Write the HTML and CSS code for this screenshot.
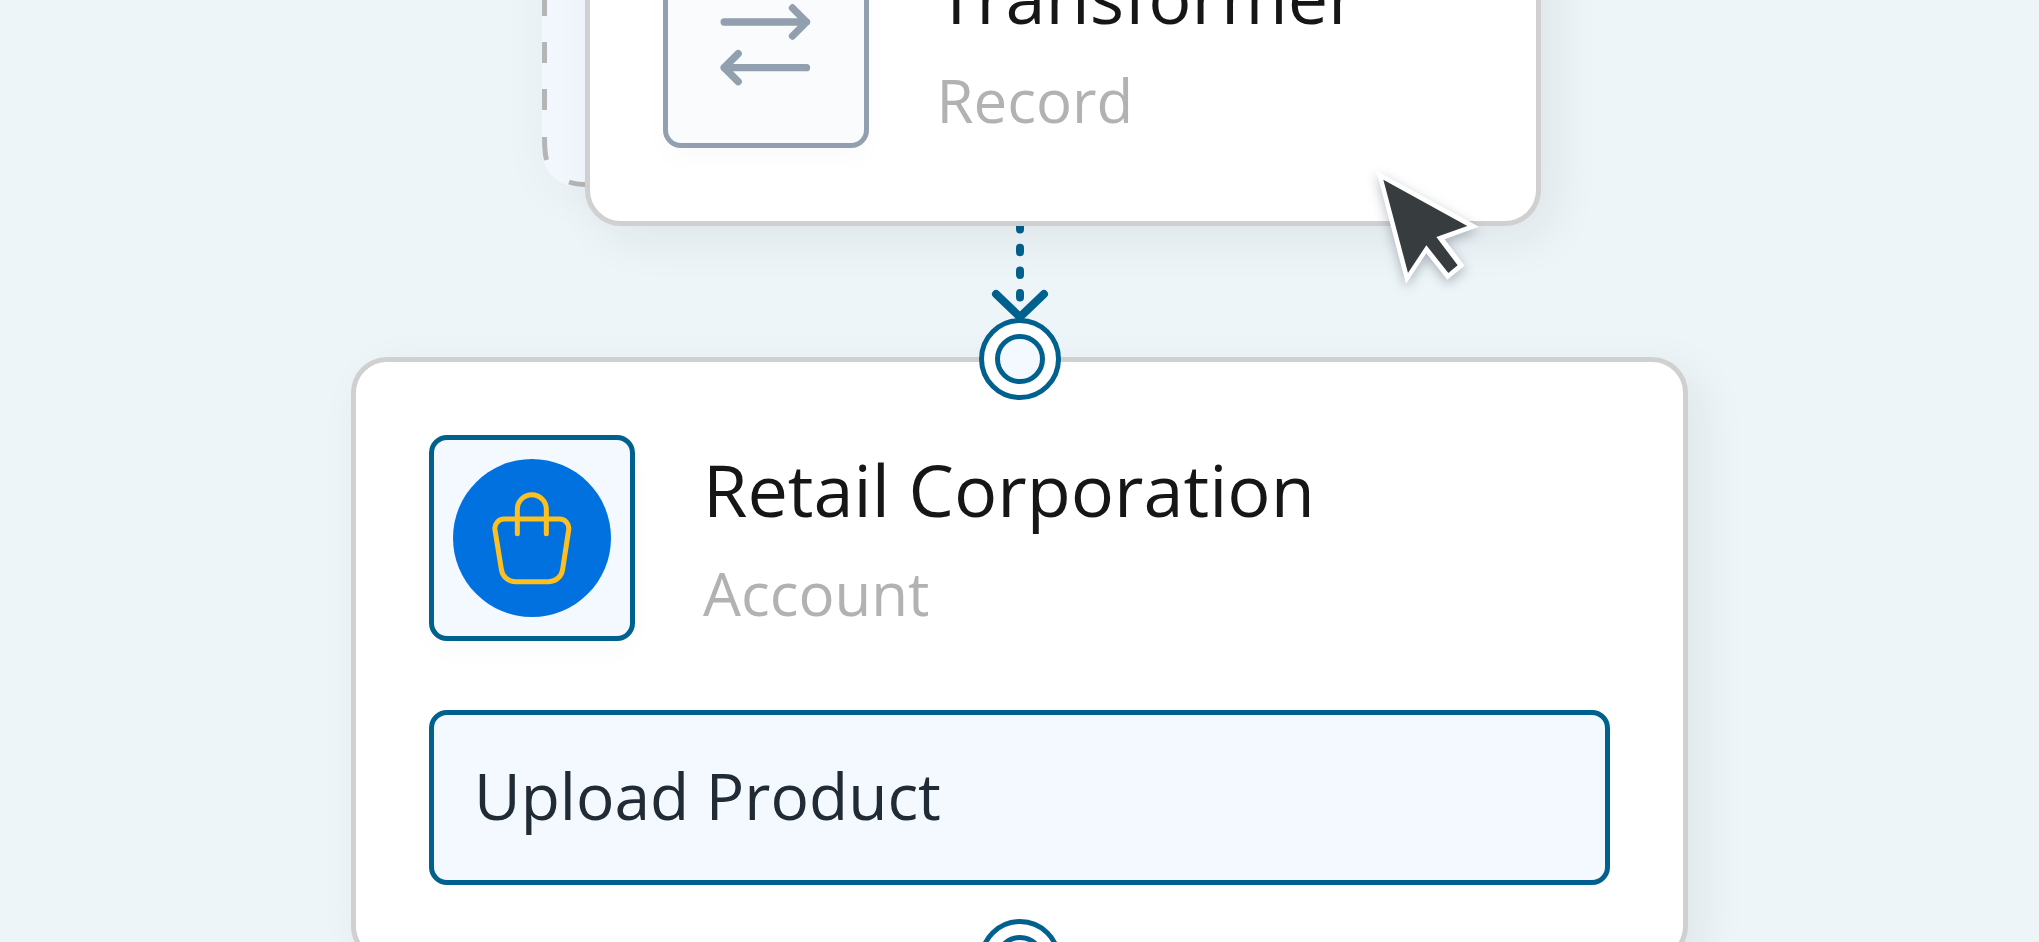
FILE: index.html
```html
<!DOCTYPE html>
<html lang="en">
<head>
  <meta charset="UTF-8" />
  <meta name="viewport" content="width=device-width, initial-scale=1" />
  <title>Flow Builder</title>
  <link rel="stylesheet" href="styles.css">
</head>
<body>
  <main class="canvas">
    <div class="slot">
      <svg class="slot-outline" viewBox="0 0 100 362" width="100" height="362" aria-hidden="true">
        <path d="M2.5 285V0" stroke-dasharray="21 26" />
        <path d="M4.500 335Q2.500 327 2.500 312" />
        <path d="M27 357Q34 359.500 44 359.500H60" />
      </svg>

      <article class="card dragged">
        <div class="card-head">
          <div class="icon-box muted">
            <svg viewBox="598 0 278 276" width="93" height="92" aria-hidden="true">
              <path d="M613 69H860M818 27L860 69L818 111M860 206H613M655 164L613 206L655 248" fill="none" stroke="#919fae" stroke-width="22" stroke-linecap="round" stroke-linejoin="round" />
            </svg>
          </div>
          <div class="card-text">
            <h2>Transformer</h2>
            <p>Record</p>
          </div>
        </div>
        <svg class="cursor" viewBox="100 55 330 360" width="110" height="120" aria-hidden="true">
          <polygon points="107,63 415,231 312,269 372,348 320,390 257,311 196,403" fill="#fff" />
          <polygon points="128,90 380,229 287,262 351,347 323,370 257,287 202,370" fill="#373c3e" />
        </svg>
      </article>
    </div>

    <div class="connector">
      <svg viewBox="0 0 60 94" width="60" height="94" aria-hidden="true">
        <path d="M30 0V78" stroke-width="8" stroke-dasharray="4.500 18.200" stroke-dashoffset="1" />
        <path d="M6 68L30 91L54 68" stroke-width="8" />
      </svg>
    </div>

    <article class="card account">
      <span class="port port-in"></span>
      <div class="card-head">
        <div class="icon-box">
          <svg viewBox="339 356 474 474" width="158" height="158" aria-hidden="true">
            <circle cx="576" cy="593" r="237" fill="#0071df" />
            <g fill="none" stroke="#ffc01f" stroke-width="15" stroke-linecap="round">
              <path d="M493 536H658A28 28 0 0 1 686 569L668 686A42 42 0 0 1 627 724H525A42 42 0 0 1 484 686L465 569A28 28 0 0 1 493 536Z" />
              <path d="M532 580V507A43.500 43.500 0 0 1 619 507V580" />
            </g>
          </svg>
        </div>
        <div class="card-text">
          <h2>Retail Corporation</h2>
          <p>Account</p>
        </div>
      </div>
      <button type="button" class="action">Upload Product</button>
      <span class="port port-out"></span>
    </article>
  </main>
</body>
</html>
```

FILE: styles.css
```css
*, *::before {
  box-sizing: border-box;
}
body {
  margin: 0;
  font-family: 'Open Sans', 'Noto Sans', sans-serif;
  font-weight: 500;
  background: #edf5f8;
  color: #161616;
}
h2, p {
  margin: 0;
}
svg {
  display: block;
}
.canvas {
  height: 100vh;
  overflow: hidden;
  display: flex;
  flex-direction: column;
  align-items: center;
}
.card {
  background: #fff;
  border: 5px solid #d0d0d0;
  border-radius: 36px;
  padding: 73px;
  box-shadow: 14px 14px 48px rgba(40, 30, 60, 0.07);
}
/* place the dragged card was lifted from; canvas is scrolled past its top */
.slot {
  position: relative;
  z-index: 1;
  flex: none;
  width: 956px;
  height: 362px;
  margin-top: -175px;
  border-radius: 36px;
  background: #f1f7fd;
  box-shadow: 0 10px 48px rgba(40, 30, 60, 0.04);
}
.slot-outline {
  fill: none;
  stroke: #b5b5b5;
  stroke-width: 5;
}
.dragged {
  position: absolute;
  left: 43px;
  top: 39px;
  width: 100%;
}
.card-head {
  display: flex;
  align-items: center;
  gap: 68px;
}
.icon-box {
  flex: none;
  display: flex;
  align-items: center;
  justify-content: center;
  width: 206px;
  height: 206px;
  border: 5px solid #00618e;
  border-radius: 18px;
  background: #f4f9ff;
  box-shadow: 0 12px 24px rgba(0, 0, 0, 0.02);
}
.icon-box.muted {
  border-color: #919fae;
  background: #f9fbfd;
}
.card-text {
  display: flex;
  flex-direction: column;
  gap: 20px;
  padding-top: 2px;
}
.card-text h2 {
  font-size: 72px;
  line-height: 88px;
  font-weight: 500;
}
.card-text p {
  font-size: 60px;
  line-height: 80px;
  color: #b2b2b2;
}
.cursor {
  position: absolute;
  left: 784px;
  top: 299px;
  overflow: visible;
  filter: drop-shadow(0 4px 6px rgba(30, 40, 60, 0.3));
}
.connector {
  flex: none;
  height: 170px;
  display: flex;
  align-items: flex-end;
  padding-bottom: 37px;
}
.connector svg {
  fill: none;
  stroke: #00618e;
  stroke-linecap: round;
  stroke-linejoin: round;
}
.account {
  position: relative;
  flex: none;
  width: calc(100% - 160px);
  max-width: 1337px;
  display: flex;
  flex-direction: column;
  gap: 69px;
  padding-bottom: 72px;
}
.port {
  position: absolute;
  left: 50%;
  display: flex;
  align-items: center;
  justify-content: center;
  width: 82px;
  height: 82px;
  margin-left: -41px;
  border: 5px solid #00618e;
  border-radius: 50%;
  background: #fff;
}
.port::before {
  content: "";
  width: 50px;
  height: 50px;
  border: 5px solid #00618e;
  border-radius: 50%;
  background: #f4f9ff;
}
.port-in {
  top: -44px;
}
.port-out {
  bottom: -44px;
}
.action {
  padding: 41px 40px 44px;
  border: 5px solid #00618e;
  border-radius: 18px;
  background: #f4f9ff;
  color: #212b36;
  font: inherit;
  font-size: 64px;
  line-height: 80px;
  text-align: left;
  cursor: pointer;
}
```
